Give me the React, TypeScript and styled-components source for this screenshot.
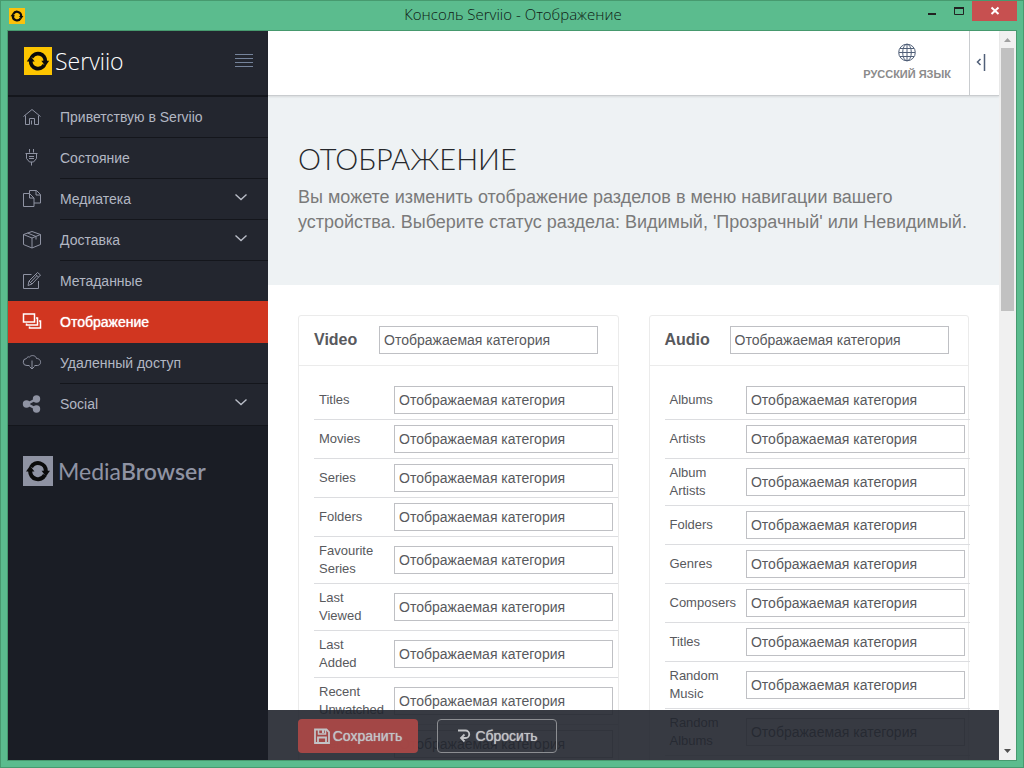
import React from "react";
import styled, { createGlobalStyle, css } from "styled-components";

const colors = {
  frame: "#5bbc8e",
  frameEdge: "#479a6f",
  panel: "#23262f",
  panelDark: "#1a1d25",
  line: "#14161c",
  accent: "#d13620",
  menuText: "#b2b7c3",
  menuIcon: "#8f93a3",
  text: "#58595d",
  fieldBorder: "#bfc0c4",
  rowBorder: "#dcdde0",
  cardBorder: "#ebebeb",
};

const GlobalStyle = createGlobalStyle`
  *, *::before, *::after { box-sizing: border-box; }
  html, body, #root { height: 100%; }
  body {
    margin: 0;
    background: ${colors.frame};
    font-family: "Liberation Sans", Arial, sans-serif;
    font-size: 14px;
    color: ${colors.text};
  }
  button, select { font: inherit; }
`;

const AppWindow = styled.div`
  display: flex;
  flex-direction: column;
  height: 100vh;
  padding: 0 6px 6px;
  background: ${colors.frame};
  border: 1px solid ${colors.frameEdge};
`;

const TitleBar = styled.header`
  display: grid;
  grid-template-columns: 1fr auto 1fr;
  align-items: center;
  height: 29px;
  flex: none;
  padding-left: 2px;
`;

const WindowTitle = styled.div`
  padding-bottom: 2px;
  font-family: "Open Sans", sans-serif;
  font-size: 15px;
  font-weight: 300;
  line-height: 27px;
  color: #0e1813;
`;

const WindowControls = styled.div`
  display: flex;
  align-self: start;
  justify-content: flex-end;
`;

const WindowButton = styled.button<{ $close?: boolean }>`
  width: ${(p) => (p.$close ? 45 : 27)}px;
  height: 20px;
  padding: 0;
  border: 0;
  display: grid;
  place-items: center;
  background: ${(p) => (p.$close ? "#c75050" : "transparent")};
`;

const WindowBody = styled.div`
  display: flex;
  flex: 1;
  min-height: 0;
  border: 1px solid ${colors.frameEdge};
  background: #fff;
`;

const Sidebar = styled.aside`
  width: 260px;
  flex: none;
  background: ${colors.panelDark};
`;

const SidebarHeader = styled.div`
  display: flex;
  align-items: center;
  justify-content: space-between;
  height: 66px;
  padding: 0 15px 4px 16px;
  background: ${colors.panel};
  border-bottom: 2px solid ${colors.line};
`;

const Brand = styled.a<{ $muted?: boolean }>`
  display: flex;
  align-items: center;
  gap: ${(p) => (p.$muted ? 5 : 3)}px;
  color: ${(p) => (p.$muted ? colors.menuIcon : "#fff")};
  text-decoration: none;
  font-family: ${(p) => (p.$muted ? "Lato" : '"Open Sans"')}, sans-serif;
  font-size: 23px;
  line-height: 28px;
  font-weight: ${(p) => (p.$muted ? 400 : 300)};

  b { font-weight: 600; }
`;

const MenuToggle = styled.button`
  padding: 0;
  border: 0;
  background: transparent;
  display: grid;
`;

const Menu = styled.nav`
  background: ${colors.panel};
  border-bottom: 1px solid ${colors.line};
`;

const MenuItem = styled.a<{ $active?: boolean }>`
  display: flex;
  align-items: stretch;
  height: 41px;
  padding-left: 14px;
  color: ${colors.menuText};
  text-decoration: none;

  &:last-child > span { border-bottom-color: transparent; }

  ${(p) =>
    p.$active &&
    css`
      height: 42px;
      margin-top: -1px;
      position: relative;
      background: ${colors.accent};
      color: #fff;
      text-shadow: 0 0 1px #fff;
      > span { border-bottom-color: transparent; }
    `}
`;

const MenuIcon = styled.svg<{ $active?: boolean }>`
  width: 20px;
  height: 20px;
  margin: 10px 18px 0 0;
  flex: none;
  fill: none;
  stroke: ${(p) => (p.$active ? "#fff" : colors.menuIcon)};
`;

const MenuLabel = styled.span`
  display: flex;
  flex: 1;
  align-items: center;
  justify-content: space-between;
  padding-right: 20px;
  border-bottom: 1px solid ${colors.line};
`;

const SidebarFooter = styled.div`
  padding: 30px 15px;
`;

const Main = styled.main`
  display: flex;
  flex-direction: column;
  flex: 1;
  min-width: 0;
  position: relative;
`;

const TopBar = styled.div`
  display: flex;
  justify-content: flex-end;
  height: 65px;
  flex: none;
  background: #fff;
  border-bottom: 1px solid #c9cccf;
  box-shadow: 0 1px 2px rgba(0, 0, 0, 0.1);
  z-index: 1;
`;

const LanguageButton = styled.button`
  display: flex;
  flex-direction: column;
  align-items: center;
  gap: 5px;
  padding: 12px 18px 0;
  border: 0;
  background: transparent;
  color: #8b8b8b;
  font-size: 11px;
  font-weight: bold;
  line-height: 14px;
  text-transform: uppercase;
`;

const CollapseButton = styled.button`
  width: 30px;
  padding: 0 0 2px 5px;
  border: 0;
  border-left: 1px solid #c9cccf;
  background: transparent;
  display: flex;
  align-items: center;
`;

const ScrollArea = styled.div`
  flex: 1;
  min-height: 0;
  overflow: auto;
  scrollbar-width: none;
`;

const Hero = styled.section`
  padding: 46px 30px 50px;
  background: #eef2f4;
`;

const PageTitle = styled.h1`
  margin: 0 0 10px;
  font-family: Lato, sans-serif;
  font-size: 29px;
  font-weight: 300;
  line-height: 33px;
  text-transform: uppercase;
  color: #25272b;
`;

const Lead = styled.p`
  margin: 0;
  font-size: 18px;
  line-height: 25px;
  color: #7a7a7a;
`;

const Cards = styled.div`
  display: grid;
  grid-template-columns: repeat(auto-fit, minmax(300px, 1fr));
  gap: 30px;
  padding: 30px;
`;

const Card = styled.section`
  min-width: 0;
  border: 1px solid ${colors.cardBorder};
  border-radius: 3px;
`;

const CardHeader = styled.div`
  display: flex;
  align-items: center;
  padding: 10px 15px 11px;
  border-bottom: 1px solid ${colors.cardBorder};
`;

const CardTitle = styled.label`
  width: 65px;
  font-size: 16px;
  font-weight: bold;
  line-height: 26px;
`;

const CardBody = styled.div`
  padding: 15px;
`;

const StatusSelect = styled.select`
  display: block;
  width: 219px;
  height: 28px;
  padding: 0 4px;
  border: 1px solid ${colors.fieldBorder};
  border-radius: 0;
  background: transparent;
  color: ${colors.text};
  appearance: none;
`;

const CategoryTable = styled.table`
  border-spacing: 0;
  font-size: 13px;
  line-height: 18px;

  th, td {
    padding: 5px;
    border-bottom: 1px solid ${colors.rowBorder};
    font-weight: normal;
    text-align: left;
    vertical-align: middle;
  }

  select { font-size: 14px; }
`;

const ActionBar = styled.div`
  position: absolute;
  left: 0;
  right: 0;
  bottom: 0;
  z-index: 2;
  display: flex;
  gap: 19px;
  height: 50px;
  padding: 9px 30px 7px;
  background: rgba(33, 37, 46, 0.9);
`;

const ActionButton = styled.button<{ $primary?: boolean }>`
  display: flex;
  align-items: center;
  justify-content: center;
  gap: 3px;
  width: 120px;
  height: 34px;
  padding: 0;
  border: 1px solid ${(p) => (p.$primary ? "transparent" : "#8c8e92")};
  border-radius: 4px;
  background: ${(p) => (p.$primary ? "rgba(173, 73, 70, 0.92)" : "transparent")};
  color: #c2c3c6;
  text-shadow: 0 0 1px #c2c3c6;
`;

const ScrollTrack = styled.div`
  display: flex;
  flex-direction: column;
  align-items: center;
  justify-content: space-between;
  width: 17px;
  flex: none;
  background: #f0f0f0;
`;

const ScrollThumb = styled.div`
  width: 13px;
  height: 263px;
  margin-bottom: auto;
  background: #c1c1c1;
`;

const ScrollArrow = styled.svg`
  width: 17px;
  height: 17px;
  flex: none;
`;

function LogoMark({ size, background }: { size: number; background: string }) {
  return (
    <svg width={size} height={size} viewBox="0 0 28 28" aria-hidden="true">
      <rect width="28" height="28" fill={background} />
      <g fill="none" stroke="#0b0b0b" strokeWidth="3.8">
        <path d="M7.6 10.4a7.300 7.300 0 0 1 13.700 3.800" />
        <path d="M20.400 17.800a7.300 7.300 0 0 1-13.700-3.800" />
      </g>
      <path d="M17.300 13.800h7.900l-3.800 5.400z" fill="#0b0b0b" />
      <path d="M2.800 14.400h7.900L6.600 9z" fill="#0b0b0b" />
    </svg>
  );
}

const icons = {
  home: <path d="M1.5 9.5 10 2.5l8.500 7M3.500 8.500v9h4v-6h5v6h4v-9M9.500 17.500v-4" />,
  plug: (
    <path d="M7.500 1v3.500M11.500 1v3.500M3.500 5.500h12M4.500 5.500v5l3 3.500h4l3-3.500v-5M7 8.500h5M7 10.500h5M9.500 14v3.500" />
  ),
  files: (
    <path d="M1.500 4.500h6l4.500 4.500v8.500H1.500zM7.500 4.500v4.500H12M7.500 4.500v-3h7l4 4v8.500H12M14 1.500v4.500h4.500" />
  ),
  box: (
    <path d="M10 1.500 18.500 4.500v10L10 18l-8.500-3.500v-10zM1.500 4.500 10 8l8.500-3.500M10 8v10M5.500 3l8.500 3.500v3" />
  ),
  note: (
    <path d="M9.500 3.500h-8v14h15V10M15.500 1.500l3 2.500-8.500 9-4 1.500 1-4.500zM13.500 3.500l3 2.500M7 10l3 3M14.500 5l-6 6.500" />
  ),
  gallery: (
    <path d="M1.500 3h11v8h-11zM14 7h1.500v7h-11v-1.500M17 10h1.500v7h-11v-1.500" strokeWidth="1.500" />
  ),
  cloud: (
    <path d="M7.500 12.500H5a3.500 3.500 0 0 1-.5-7c.5-1.500 2-2 3-1.500 2-2.500 6.500-1.500 7 1.500 5 0 5.500 6.500 1 7h-3M10 7.500v8.500M7.500 13.500 10 16l2.500-2.500" />
  ),
  share: (
    <g>
      <path d="M14.500 5 5 10l9.500 5" strokeWidth="2.500" />
      <circle cx="14.500" cy="5" r="3.700" fill={colors.menuIcon} stroke="none" />
      <circle cx="4.500" cy="10" r="3.700" fill={colors.menuIcon} stroke="none" />
      <circle cx="14.500" cy="15" r="3.700" fill={colors.menuIcon} stroke="none" />
    </g>
  ),
};

interface MenuEntry {
  label: string;
  icon: keyof typeof icons;
  expandable?: boolean;
  active?: boolean;
}

const menu: MenuEntry[] = [
  { label: "Приветствую в Serviio", icon: "home" },
  { label: "Состояние", icon: "plug" },
  { label: "Медиатека", icon: "files", expandable: true },
  { label: "Доставка", icon: "box", expandable: true },
  { label: "Метаданные", icon: "note" },
  { label: "Отображение", icon: "gallery", active: true },
  { label: "Удаленный доступ", icon: "cloud" },
  { label: "Social", icon: "share", expandable: true },
];

const groups = [
  {
    name: "Video",
    rows: ["Titles", "Movies", "Series", "Folders", "Favourite Series", "Last Viewed", "Last Added", "Recent Unwatched", "Genres"],
  },
  {
    name: "Audio",
    rows: ["Albums", "Artists", "Album Artists", "Folders", "Genres", "Composers", "Titles", "Random Music", "Random Albums"],
  },
];

function StatusField({ id }: { id: string }) {
  return (
    <StatusSelect id={id} defaultValue="visible">
      <option value="visible">Отображаемая категория</option>
    </StatusSelect>
  );
}

function CategoryCard({ name, rows }: { name: string; rows: string[] }) {
  return (
    <Card>
      <CardHeader>
        <CardTitle htmlFor={name}>{name}</CardTitle>
        <StatusField id={name} />
      </CardHeader>
      <CardBody>
        <CategoryTable>
          <tbody>
            {rows.map((row) => {
              const id = `${name}-${row}`.replace(/ /g, "-");
              return (
                <tr key={row}>
                  <th scope="row">
                    <label htmlFor={id}>{row}</label>
                  </th>
                  <td>
                    <StatusField id={id} />
                  </td>
                </tr>
              );
            })}
          </tbody>
        </CategoryTable>
      </CardBody>
    </Card>
  );
}

export default function App() {
  return (
    <>
      <GlobalStyle />
      <AppWindow>
        <TitleBar>
          <LogoMark size={16} background="#fcc20c" />
          <WindowTitle>Консоль Serviio - Отображение</WindowTitle>
          <WindowControls>
            <WindowButton aria-label="Minimize">
              <svg width="12" height="12" aria-hidden="true">
                <path d="M2 9h8" stroke="#222" strokeWidth="2" />
              </svg>
            </WindowButton>
            <WindowButton aria-label="Maximize">
              <svg width="12" height="12" aria-hidden="true">
                <path d="M1.500 2v7.500h9V2" fill="none" stroke="#222" />
                <path d="M1 3h10" stroke="#222" strokeWidth="2" />
              </svg>
            </WindowButton>
            <WindowButton $close aria-label="Close">
              <svg width="10" height="10" aria-hidden="true">
                <path d="m1.500 1.500 7 6.500M8.500 1.500l-7 6.500" stroke="#fff" strokeWidth="2" />
              </svg>
            </WindowButton>
          </WindowControls>
        </TitleBar>

        <WindowBody>
          <Sidebar>
            <SidebarHeader>
              <Brand href="#">
                <LogoMark size={28} background="#fdc500" />
                Serviio
              </Brand>
              <MenuToggle aria-label="Menu">
                <svg width="18" height="14" aria-hidden="true">
                  <path d="M0 .5h18M0 4.500h18M0 8.500h18M0 12.500h18" stroke="#75839b" />
                </svg>
              </MenuToggle>
            </SidebarHeader>
            <Menu>
              {menu.map((item) => (
                <MenuItem key={item.label} href="#" $active={item.active}>
                  <MenuIcon viewBox="0 0 20 20" $active={item.active} aria-hidden="true">
                    {icons[item.icon]}
                  </MenuIcon>
                  <MenuLabel>
                    {item.label}
                    {item.expandable && (
                      <svg width="14" height="12" aria-hidden="true">
                        <path d="m1.500 1.500 5.500 5 5.500-5" fill="none" stroke="#b9bdc7" strokeWidth="1.400" />
                      </svg>
                    )}
                  </MenuLabel>
                </MenuItem>
              ))}
            </Menu>
            <SidebarFooter>
              <Brand href="#" $muted>
                <LogoMark size={30} background={colors.menuIcon} />
                <span>
                  Media<b>Browser</b>
                </span>
              </Brand>
            </SidebarFooter>
          </Sidebar>

          <Main>
            <TopBar>
              <LanguageButton>
                <svg width="18" height="19" viewBox="0 0 18 19" fill="none" stroke="#505f78" aria-hidden="true">
                  <circle cx="9" cy="9.500" r="8.300" />
                  <ellipse cx="9" cy="9.500" rx="4.300" ry="8.300" />
                  <path d="M9 1v17M1 9.500h16M2 5.500h14M2 13.500h14" />
                </svg>
                Русский язык
              </LanguageButton>
              <CollapseButton aria-label="Collapse panel">
                <svg width="12" height="18" aria-hidden="true">
                  <path d="M5.500 6 2.500 9l3 3M9.500 1v17" fill="none" stroke="#505f78" strokeWidth="1.500" />
                </svg>
              </CollapseButton>
            </TopBar>
            <ScrollArea>
              <Hero>
                <PageTitle>Отображение</PageTitle>
                <Lead>
                  Вы можете изменить отображение разделов в меню навигации вашего устройства. Выберите статус
                  раздела: Видимый, 'Прозрачный' или Невидимый.
                </Lead>
              </Hero>
              <Cards>
                {groups.map((group) => (
                  <CategoryCard key={group.name} {...group} />
                ))}
              </Cards>
            </ScrollArea>
            <ActionBar>
              <ActionButton $primary>
                <svg width="16" height="16" fill="none" stroke="#c2c3c6" aria-hidden="true">
                  <path d="M1 1.500h11.500l2.500 2.500v11H1zM4 14V9.500h8V14" strokeWidth="1.800" />
                  <path d="M4.500 1.500V6h7V2" strokeWidth="1.500" />
                  <path d="M9 2v3" strokeWidth="2" />
                </svg>
                Сохранить
              </ActionButton>
              <ActionButton>
                <svg width="16" height="16" fill="none" stroke="#c2c3c6" strokeWidth="1.800" aria-hidden="true">
                  <path d="M2 2.500h7.500a3.500 3.500 0 0 1 0 7.500H6M8.500 6.500 5 10l3.500 3.500" />
                </svg>
                Сбросить
              </ActionButton>
            </ActionBar>
          </Main>

          <ScrollTrack aria-hidden="true">
            <ScrollArrow>
              <path d="m5 11 3.500-4 3.500 4z" fill="#a0a0a0" />
            </ScrollArrow>
            <ScrollThumb />
            <ScrollArrow>
              <path d="m5 6 3.500 4L12 6z" fill="#505050" />
            </ScrollArrow>
          </ScrollTrack>
        </WindowBody>
      </AppWindow>
    </>
  );
}
